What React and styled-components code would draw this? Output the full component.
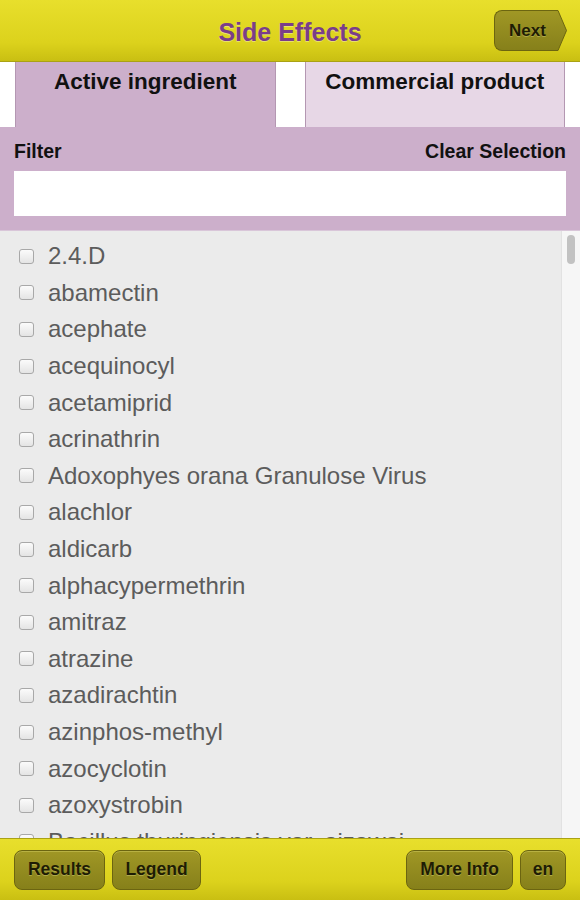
import React, { useState } from "react"
import styled, { createGlobalStyle } from "styled-components"

const GlobalStyle = createGlobalStyle`
    html, body {
        margin: 0;
        padding: 0;
        background: #ffffff;
    }
    body {
        font-family: "Liberation Sans", Arial, Helvetica, sans-serif;
    }
`

const Page = styled.div`
    width: 580px;
    height: 900px;
    display: flex;
    flex-direction: column;
    overflow: hidden;
`
const Bar = styled.div`
    height: 62px;
    flex: none;
    display: flex;
    align-items: center;
    padding: 0 14px;
    box-sizing: border-box;
    background: linear-gradient(#e8df2c, #dcd21c 70%, #c9bf12);
    border-${p => (p.$bottom ? "top" : "bottom")}: 1px solid #aaa214;
`
const HeaderBar = styled(Bar)`
    justify-content: center;
    position: relative;
`
const Title = styled.h1`
    margin: 0 0 -3px;
    font-size: 25px;
    font-weight: bold;
    color: #7a3d8a;
    text-shadow: 0 1px 0 rgba(255, 255, 255, 0.35);
`
const NextWrap = styled.div`
    position: absolute;
    right: 13px;
    top: 10px;
    display: flex;
    align-items: center;
`
const NextBody = styled.div`
    height: 41px;
    width: 62px;
    display: flex;
    align-items: center;
    justify-content: center;
    box-sizing: border-box;
    padding-left: 4px;
    border-radius: 8px 0 0 8px;
    background: linear-gradient(#a09725, #86801a);
    border: 1px solid #6c6510;
    border-right: none;
    font-size: 17px;
    font-weight: bold;
    color: #1e1c04;
    text-shadow: 0 1px 0 rgba(255, 255, 180, 0.3);
`
const Tabs = styled.div`
    height: 65px;
    flex: none;
    display: flex;
    gap: 29px;
    padding: 0 15px;
    background: #fff;
`
const Tab = styled.div`
    flex: 1;
    box-sizing: border-box;
    background: ${p => (p.$active ? "#ccafcb" : "#e7d7e6")};
    border: 1px solid #b497b2;
    border-top: none;
    border-bottom: none;
    text-align: center;
    padding-top: 7px;
    font-size: 22.5px;
    font-weight: bold;
    color: #111;
`
const FilterPanel = styled.div`
    flex: none;
    height: 104px;
    box-sizing: border-box;
    background: #ccafcb;
    padding: 13px 14px 0;
    border-bottom: 1px solid #d9c6d9;
`
const FilterHead = styled.div`
    display: flex;
    justify-content: space-between;
    font-size: 19.5px;
    font-weight: bold;
    color: #111;
    height: 25px;
    margin-bottom: 6px;
`
const FilterInput = styled.input`
    display: block;
    width: 100%;
    height: 45px;
    box-sizing: border-box;
    border: none;
    background: #fff;
    outline: none;
    font-size: 18px;
    padding: 0 10px;
`
const ListArea = styled.div`
    flex: 1;
    min-height: 0;
    display: flex;
    background: #ebebeb;
`
const List = styled.ul`
    flex: 1;
    margin: 0;
    padding: 7px 0 0 19px;
    list-style: none;
    overflow: hidden;
`
const Row = styled.li`
    height: 36.6px;
    display: flex;
    align-items: center;
    gap: 14px;
    font-size: 24px;
    color: #5c5c5c;
    white-space: nowrap;
`
const Check = styled.span`
    width: 15px;
    height: 15px;
    flex: none;
    box-sizing: border-box;
    border: 1px solid #a8a8a8;
    border-radius: 3px;
    background: linear-gradient(#fbfbfb, #e4e4e4);
`
const Track = styled.div`
    width: 19px;
    flex: none;
    background: #f6f6f6;
    border-left: 1px solid #e2e2e2;
    box-sizing: border-box;
    padding: 4px 0 0 5px;
`
const Thumb = styled.div`
    width: 8px;
    height: 29px;
    border-radius: 4px;
    background: #c2c2c2;
`
const Spacer = styled.div`
    flex: 1;
`
const FootButton = styled.button`
    height: 40px;
    width: ${p => p.$w}px;
    margin-right: ${p => p.$gap || 0}px;
    padding: 0;
    box-sizing: border-box;
    border-radius: 8px;
    border: 1px solid #6c6510;
    background: linear-gradient(#a09725, #86801a);
    box-shadow: inset 0 1px 0 rgba(255, 255, 160, 0.25);
    font-family: "Liberation Sans", Arial, sans-serif;
    font-size: 17.5px;
    font-weight: bold;
    color: #1e1c04;
    text-shadow: 0 1px 0 rgba(255, 255, 180, 0.3);
`

const items = [
    "2.4.D", "abamectin", "acephate", "acequinocyl", "acetamiprid", "acrinathrin",
    "Adoxophyes orana Granulose Virus", "alachlor", "aldicarb", "alphacypermethrin",
    "amitraz", "atrazine", "azadirachtin", "azinphos-methyl", "azocyclotin",
    "azoxystrobin", "Bacillus thuringiensis var. aizawai", "Bacillus thuringiensis var. kurstaki",
]

export default function App() {
    const [filter, setFilter] = useState("")  // filter text

    return (
        <>
            <GlobalStyle />
            <Page>
                <HeaderBar>
                    <Title>Side Effects</Title>
                    <NextWrap>
                        <NextBody>Next</NextBody>
                        <svg width="11" height="41" viewBox="0 0 11 41">
                            <defs>
                                <linearGradient id="ng" x1="0" y1="0" x2="0" y2="1">
                                    <stop offset="0" stopColor="#a09725" />
                                    <stop offset="1" stopColor="#86801a" />
                                </linearGradient>
                            </defs>
                            <path d="M0 0.5 L2 0.5 L10.5 20.5 L2 40.5 L0 40.5 Z" fill="url(#ng)" />
                            <path d="M0 0.5 L2 0.5 L10.5 20.5 L2 40.5 L0 40.5" fill="none" stroke="#6c6510" strokeWidth="1" />
                        </svg>
                    </NextWrap>
                </HeaderBar>
                <Tabs>
                    <Tab $active>Active ingredient</Tab>
                    <Tab>Commercial product</Tab>
                </Tabs>
                <FilterPanel>
                    <FilterHead>
                        <span>Filter</span>
                        <span>Clear Selection</span>
                    </FilterHead>
                    <FilterInput value={filter} onChange={e => { setFilter(e.target.value) }} />
                </FilterPanel>
                <ListArea>
                    <List>
                        {items.map(name => (
                            <Row key={name}>
                                <Check />
                                {name}
                            </Row>
                        ))}
                    </List>
                    <Track>
                        <Thumb />
                    </Track>
                </ListArea>
                <Bar $bottom>
                    <FootButton $w={91} $gap={7}>Results</FootButton>
                    <FootButton $w={89}>Legend</FootButton>
                    <Spacer />
                    <FootButton $w={107} $gap={7}>More Info</FootButton>
                    <FootButton $w={46}>en</FootButton>
                </Bar>
            </Page>
        </>
    )
}
